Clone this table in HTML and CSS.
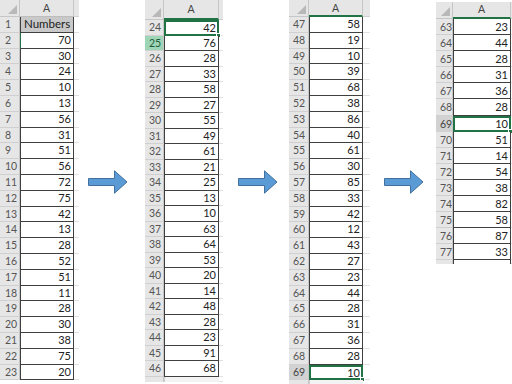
FILE: index.html
```html
<!DOCTYPE html>
<html>
<head>
<meta charset="utf-8">
<link rel="stylesheet" href="styles.css">
</head>
<body>
<div class="strip">
  <div class="sheet s1">
    <div class="row head"><div class="rh corner"><span class="tri"></span></div><div class="ch">A</div><div class="stub"></div></div>
    <div class="row"><div class="rh">1</div><div class="c title">Numbers</div><div class="stub"></div></div>
    <div class="row"><div class="rh">2</div><div class="c edge">70</div><div class="stub"></div></div>
    <div class="row"><div class="rh">3</div><div class="c">30</div><div class="stub"></div></div>
    <div class="row"><div class="rh">4</div><div class="c">24</div><div class="stub"></div></div>
    <div class="row"><div class="rh">5</div><div class="c">10</div><div class="stub"></div></div>
    <div class="row"><div class="rh">6</div><div class="c">13</div><div class="stub"></div></div>
    <div class="row"><div class="rh">7</div><div class="c">56</div><div class="stub"></div></div>
    <div class="row"><div class="rh">8</div><div class="c">31</div><div class="stub"></div></div>
    <div class="row"><div class="rh">9</div><div class="c">51</div><div class="stub"></div></div>
    <div class="row"><div class="rh">10</div><div class="c">56</div><div class="stub"></div></div>
    <div class="row"><div class="rh">11</div><div class="c">72</div><div class="stub"></div></div>
    <div class="row"><div class="rh">12</div><div class="c">75</div><div class="stub"></div></div>
    <div class="row"><div class="rh">13</div><div class="c">42</div><div class="stub"></div></div>
    <div class="row"><div class="rh">14</div><div class="c">13</div><div class="stub"></div></div>
    <div class="row"><div class="rh">15</div><div class="c">28</div><div class="stub"></div></div>
    <div class="row"><div class="rh">16</div><div class="c">52</div><div class="stub"></div></div>
    <div class="row"><div class="rh">17</div><div class="c">51</div><div class="stub"></div></div>
    <div class="row"><div class="rh">18</div><div class="c">11</div><div class="stub"></div></div>
    <div class="row"><div class="rh">19</div><div class="c">28</div><div class="stub"></div></div>
    <div class="row"><div class="rh">20</div><div class="c">30</div><div class="stub"></div></div>
    <div class="row"><div class="rh">21</div><div class="c">38</div><div class="stub"></div></div>
    <div class="row"><div class="rh">22</div><div class="c">75</div><div class="stub"></div></div>
    <div class="row"><div class="rh">23</div><div class="c">20</div><div class="stub"></div></div>
  </div>

  <svg class="arrow a1" width="40" height="24" viewBox="0 0 40 24"><path d="M0.5 8.5 H26.5 V0.8 L39 12 L26.5 23.2 V15.5 H0.5 Z" fill="#5b9bd5" stroke="#41719c" stroke-width="1"/></svg>

  <div class="sheet s2">
    <div class="row head"><div class="rh corner"><span class="tri"></span></div><div class="ch sel">A</div><div class="stub"></div></div>
    <div class="row"><div class="rh">24</div><div class="c active">42<span class="handle"></span></div><div class="stub"></div></div>
    <div class="row"><div class="rh green">25</div><div class="c">76</div><div class="stub"></div></div>
    <div class="row"><div class="rh">26</div><div class="c">28</div><div class="stub"></div></div>
    <div class="row"><div class="rh">27</div><div class="c">33</div><div class="stub"></div></div>
    <div class="row"><div class="rh">28</div><div class="c">58</div><div class="stub"></div></div>
    <div class="row"><div class="rh">29</div><div class="c">27</div><div class="stub"></div></div>
    <div class="row"><div class="rh">30</div><div class="c">55</div><div class="stub"></div></div>
    <div class="row"><div class="rh">31</div><div class="c">49</div><div class="stub"></div></div>
    <div class="row"><div class="rh">32</div><div class="c">61</div><div class="stub"></div></div>
    <div class="row"><div class="rh">33</div><div class="c">21</div><div class="stub"></div></div>
    <div class="row"><div class="rh">34</div><div class="c">25</div><div class="stub"></div></div>
    <div class="row"><div class="rh">35</div><div class="c">13</div><div class="stub"></div></div>
    <div class="row"><div class="rh">36</div><div class="c">10</div><div class="stub"></div></div>
    <div class="row"><div class="rh">37</div><div class="c">63</div><div class="stub"></div></div>
    <div class="row"><div class="rh">38</div><div class="c">64</div><div class="stub"></div></div>
    <div class="row"><div class="rh">39</div><div class="c">53</div><div class="stub"></div></div>
    <div class="row"><div class="rh">40</div><div class="c">20</div><div class="stub"></div></div>
    <div class="row"><div class="rh">41</div><div class="c">14</div><div class="stub"></div></div>
    <div class="row"><div class="rh">42</div><div class="c">48</div><div class="stub"></div></div>
    <div class="row"><div class="rh">43</div><div class="c">28</div><div class="stub"></div></div>
    <div class="row"><div class="rh">44</div><div class="c">23</div><div class="stub"></div></div>
    <div class="row"><div class="rh">45</div><div class="c">91</div><div class="stub"></div></div>
    <div class="row"><div class="rh">46</div><div class="c">68</div><div class="stub"></div></div>
    <div class="row tail"><div class="rh"></div><div class="c"></div><div class="stub"></div></div>
  </div>

  <svg class="arrow a2" width="40" height="24" viewBox="0 0 40 24"><path d="M0.5 8.5 H26.5 V0.8 L39 12 L26.5 23.2 V15.5 H0.5 Z" fill="#5b9bd5" stroke="#41719c" stroke-width="1"/></svg>

  <div class="sheet s3">
    <div class="row head"><div class="rh corner"><span class="tri"></span></div><div class="ch sel">A</div><div class="stub"></div></div>
    <div class="row"><div class="rh">47</div><div class="c">58</div><div class="stub"></div></div>
    <div class="row"><div class="rh">48</div><div class="c">19</div><div class="stub"></div></div>
    <div class="row"><div class="rh">49</div><div class="c">10</div><div class="stub"></div></div>
    <div class="row"><div class="rh">50</div><div class="c">39</div><div class="stub"></div></div>
    <div class="row"><div class="rh">51</div><div class="c">68</div><div class="stub"></div></div>
    <div class="row"><div class="rh">52</div><div class="c">38</div><div class="stub"></div></div>
    <div class="row"><div class="rh">53</div><div class="c">86</div><div class="stub"></div></div>
    <div class="row"><div class="rh">54</div><div class="c">40</div><div class="stub"></div></div>
    <div class="row"><div class="rh">55</div><div class="c">61</div><div class="stub"></div></div>
    <div class="row"><div class="rh">56</div><div class="c">30</div><div class="stub"></div></div>
    <div class="row"><div class="rh">57</div><div class="c">85</div><div class="stub"></div></div>
    <div class="row"><div class="rh">58</div><div class="c">33</div><div class="stub"></div></div>
    <div class="row"><div class="rh">59</div><div class="c">42</div><div class="stub"></div></div>
    <div class="row"><div class="rh">60</div><div class="c">12</div><div class="stub"></div></div>
    <div class="row"><div class="rh">61</div><div class="c">43</div><div class="stub"></div></div>
    <div class="row"><div class="rh">62</div><div class="c">27</div><div class="stub"></div></div>
    <div class="row"><div class="rh">63</div><div class="c">23</div><div class="stub"></div></div>
    <div class="row"><div class="rh">64</div><div class="c">44</div><div class="stub"></div></div>
    <div class="row"><div class="rh">65</div><div class="c">28</div><div class="stub"></div></div>
    <div class="row"><div class="rh">66</div><div class="c">31</div><div class="stub"></div></div>
    <div class="row"><div class="rh">67</div><div class="c">36</div><div class="stub"></div></div>
    <div class="row"><div class="rh">68</div><div class="c">28</div><div class="stub"></div></div>
    <div class="row"><div class="rh dark">69</div><div class="c active">10<span class="handle"></span></div><div class="stub"></div></div>
    <div class="row tail"><div class="rh"></div><div class="c"></div><div class="stub"></div></div>
  </div>

  <svg class="arrow a3" width="40" height="24" viewBox="0 0 40 24"><path d="M0.5 8.5 H26.5 V0.8 L39 12 L26.5 23.2 V15.5 H0.5 Z" fill="#5b9bd5" stroke="#41719c" stroke-width="1"/></svg>

  <div class="sheet s4">
    <div class="row head"><div class="rh corner"><span class="tri"></span></div><div class="ch sel">A</div><div class="stub"></div></div>
    <div class="row"><div class="rh">63</div><div class="c">23</div><div class="stub"></div></div>
    <div class="row"><div class="rh">64</div><div class="c">44</div><div class="stub"></div></div>
    <div class="row"><div class="rh">65</div><div class="c">28</div><div class="stub"></div></div>
    <div class="row"><div class="rh">66</div><div class="c">31</div><div class="stub"></div></div>
    <div class="row"><div class="rh">67</div><div class="c">36</div><div class="stub"></div></div>
    <div class="row"><div class="rh">68</div><div class="c">28</div><div class="stub"></div></div>
    <div class="row"><div class="rh dark">69</div><div class="c active">10<span class="handle"></span></div><div class="stub"></div></div>
    <div class="row"><div class="rh">70</div><div class="c">51</div><div class="stub"></div></div>
    <div class="row"><div class="rh">71</div><div class="c">14</div><div class="stub"></div></div>
    <div class="row"><div class="rh">72</div><div class="c">54</div><div class="stub"></div></div>
    <div class="row"><div class="rh">73</div><div class="c">38</div><div class="stub"></div></div>
    <div class="row"><div class="rh">74</div><div class="c">82</div><div class="stub"></div></div>
    <div class="row"><div class="rh">75</div><div class="c">58</div><div class="stub"></div></div>
    <div class="row"><div class="rh">76</div><div class="c">87</div><div class="stub"></div></div>
    <div class="row"><div class="rh">77</div><div class="c">33</div><div class="stub"></div></div>
    <div class="row tail"><div class="rh"></div><div class="c"></div><div class="stub"></div></div>
  </div>
</div>
</body>
</html>
```

FILE: styles.css
```css
html, body {
  margin: 0;
  padding: 0;
  background: #ffffff;
}
body {
  width: 512px;
  height: 384px;
  overflow: hidden;
  font-family: Lato, "Open Sans", "Liberation Sans", sans-serif;
}
.strip {
  display: flex;
  align-items: flex-start;
}
.sheet {
  flex: 0 0 auto;
  display: flex;
  flex-direction: column;
  --w0: 20px;
  --w1: 54px;
  --w2: 4px;
  --hh: 17px;
  --rh: 15.8px;
  --pad: 5px;
}
.s1 { margin-left: 0; --w0: 20px; --w1: 54px; --w2: 5px; --hh: 17px; --rh: 15.8px; --pad: 5px; }
.s2 { margin-left: 17px; --w0: 19px; --w1: 55px; --w2: 4px; --hh: 20px; --rh: 15.5px; --pad: 4px; }
.s3 { margin-left: 11px; --w0: 20px; --w1: 54px; --w2: 7px; --hh: 17px; --rh: 15.8px; --pad: 4px; }
.s4 { margin-left: 12px; --w0: 17px; --w1: 58px; --w2: 4px; --hh: 17px; --rh: 16.1px; --pad: 4px; }
.s4 .head { margin-top: 2px; height: calc(var(--hh) - 2px); }

.row {
  display: flex;
  height: var(--rh);
}
.row.head { height: var(--hh); }
.row.tail { height: 5px; }

.rh {
  width: var(--w0);
  box-sizing: border-box;
  background: #e6e6e6;
  color: #555;
  font-size: 10.5px;
  line-height: var(--rh);
  padding-left: var(--pad);
  border-bottom: 1px solid #d0d0d0;
  border-right: 1px solid #c6c6c6;
  white-space: nowrap;
  overflow: hidden;
}
.rh.green { background: #9fd5b7; color: #1e5e3a; }
.rh.dark { background: #d2d2d2; color: #444; }
.corner {
  position: relative;
  border-bottom: 1px solid #c6c6c6;
}
.tri {
  position: absolute;
  right: 2px;
  bottom: 2px;
  width: 0;
  height: 0;
  border-left: 9px solid transparent;
  border-bottom: 9px solid #b8b8b8;
}
.ch {
  width: var(--w1);
  box-sizing: border-box;
  background: #e6e6e6;
  color: #444;
  font-size: 10.5px;
  text-align: center;
  line-height: var(--hh);
  border-bottom: 1px solid #bdbdbd;
  border-right: 1px solid #c6c6c6;
}
.ch.sel { border-bottom: 2px solid #217346; line-height: calc(var(--hh) - 1px); }
.s4 .ch.sel { line-height: calc(var(--hh) - 3px); }
.head .stub { background: #e6e6e6; border-bottom: 1px solid #d0d0d0; }
.stub {
  width: var(--w2);
  box-sizing: border-box;
  border-bottom: 1px solid #e1e1e1;
}
.c {
  position: relative;
  width: var(--w1);
  box-sizing: border-box;
  background: #fff;
  color: #222;
  font-size: 11px;
  text-align: right;
  padding-right: 2px;
  line-height: calc(var(--rh) - 1px);
  border-left: 1px solid #3f3f3f;
  border-right: 1px solid #3f3f3f;
  border-bottom: 1px solid #3f3f3f;
  white-space: nowrap;
}
.c.title {
  background: #c9c9c9;
  color: #222;
  text-align: left;
  padding-left: 3px;
  font-size: 11.5px;
}
.c.edge { border-left: 1px solid #217346; }
.c.active {
  border: 2px solid #217346;
  line-height: calc(var(--rh) - 4px);
  padding-right: 1px;
}
.handle {
  position: absolute;
  right: -4px;
  bottom: -4px;
  width: 5px;
  height: 5px;
  background: #217346;
  border: 1px solid #fff;
  box-sizing: border-box;
}
.tail .rh { background: #e6e6e6; border-bottom: none; }
.tail .c { border: none; border-left: 1px solid #d0d0d0; background: #f3f3f3; }
.s4 .tail { height: 4px; }
.s4 .tail .c { background: #fff; border-left: 1px solid #3f3f3f; border-right: 1px solid #3f3f3f; }

.arrow {
  flex: 0 0 auto;
  display: block;
  margin-top: 170px;
}
.a1 { margin-left: 9px; }
.a2 { margin-left: 15px; }
.a3 { margin-left: 14px; }
```
